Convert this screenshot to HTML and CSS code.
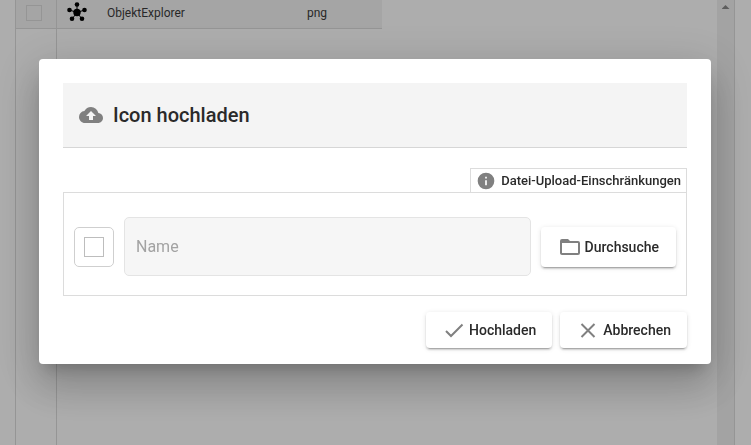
FILE: index.html
```html
<!DOCTYPE html>
<html lang="de">
<head>
<meta charset="utf-8">
<title>Icon hochladen</title>
<link rel="stylesheet" href="styles.css">
</head>
<body>
<main class="page">
  <section class="grid-panel">
    <div class="grid-body">
      <table class="icons">
        <tbody>
          <tr>
            <td class="col-check"><input type="checkbox" class="box row-box" aria-label="ObjektExplorer auswählen"></td>
            <td class="col-icon">
              <svg width="22" height="22" viewBox="0 0 22 22" aria-hidden="true">
                <g stroke="#000" stroke-width="1"><path d="M11 11.500V4M11 11.500L3.500 9M11 11.500L18.500 9M11 11.500L6 18M11 11.500L16 18"/></g>
                <circle cx="11" cy="11.500" r="3.700"/><circle cx="11" cy="3.500" r="2.300"/><circle cx="3.500" cy="9" r="2.300"/><circle cx="18.500" cy="9" r="2.300"/><circle cx="6" cy="17.700" r="2.300"/><circle cx="16" cy="17.700" r="2.300"/>
              </svg>
            </td>
            <td class="col-name">ObjektExplorer</td>
            <td class="col-type">png</td>
          </tr>
        </tbody>
      </table>
      <div class="check-gutter"></div>
    </div>
    <div class="scroll"><span class="scroll-up"></span></div>
  </section>
</main>
<div class="overlay">
  <form class="dialog" role="dialog" aria-labelledby="title">
    <header class="head">
      <svg width="24" height="24" viewBox="0 0 24 24" fill="#808080" aria-hidden="true"><path d="M19.350 10.040A7.490 7.490 0 0 0 12 4C9.110 4 6.600 5.640 5.350 8.040A5.994 5.994 0 0 0 0 14c0 3.310 2.690 6 6 6h13c2.760 0 5-2.240 5-5 0-2.640-2.050-4.780-4.650-4.960zM14 13v4h-4v-4H7l5-5 5 5h-3z"/></svg>
      <h1 id="title">Icon hochladen</h1>
    </header>
    <div class="tab">
      <svg width="20" height="20" viewBox="0 0 24 24" fill="#808080" aria-hidden="true"><path d="M12 2a10 10 0 1 0 0 20 10 10 0 0 0 0-20zm1 15h-2v-6h2v6zm0-8h-2V7h2v2z"/></svg>
      <span>Datei-Upload-Einschränkungen</span>
    </div>
    <div class="upload">
      <div class="pick"><input type="checkbox" class="box" aria-label="Datei auswählen"></div>
      <input type="text" class="name" placeholder="Name" aria-label="Name">
      <button type="button" class="btn browse">
        <svg width="24" height="24" viewBox="0 0 24 24" fill="#808080" aria-hidden="true"><path d="M20 6h-8l-2-2H4a2 2 0 0 0-2 2v12c0 1.100.9 2 2 2h16a2 2 0 0 0 2-2V8a2 2 0 0 0-2-2zm0 12H4V8h16v10z"/></svg>
        Durchsuche
      </button>
    </div>
    <footer class="actions">
      <button type="submit" class="btn">
        <svg width="24" height="24" viewBox="0 0 24 24" fill="none" stroke="#808080" stroke-width="2" aria-hidden="true"><path d="M4 13l5 5L20.500 6.500"/></svg>
        Hochladen
      </button>
      <button type="button" class="btn">
        <svg width="24" height="24" viewBox="0 0 24 24" fill="none" stroke="#808080" stroke-width="2" aria-hidden="true"><path d="M5.500 6l13 13M18.500 6l-13 13"/></svg>
        Abbrechen
      </button>
    </footer>
  </form>
</div>
</body>
</html>
```
FILE: styles.css
```css
* { box-sizing: border-box; }

body {
  margin: 0;
  font-family: Roboto, "Liberation Sans", sans-serif;
  color: #2a2a2a;
  background: #fff;
  overflow: hidden;
}

.page {
  display: flex;
  height: 100vh;
  padding: 0 16px 0 15px;
}

.grid-panel {
  display: flex;
  flex: 1;
  border: solid #dcdcdc;
  border-width: 0 1px;
}

.grid-body {
  display: flex;
  flex-direction: column;
  flex: 1;
}

.icons {
  border-collapse: separate;
  border-spacing: 0;
  table-layout: fixed;
  width: 366px;
  color: #3c3c3c;
  font-size: 12px;
}

.icons td {
  height: 29px;
  padding: 0;
  background: #f4f4f4;
  border-bottom: 1px solid #dcdcdc;
}

.icons .col-check {
  width: 41px;
  border-right: 1px solid #dcdcdc;
  vertical-align: top;
}

.col-icon {
  width: 50px;
  vertical-align: top;
}

.col-icon svg {
  display: block;
  margin: 1px 0 0 9px;
}

.icons .col-name { width: 200px; padding-bottom: 3px; }
.icons .col-type { padding-bottom: 3px; }

.check-gutter {
  flex: 1;
  width: 41px;
  border-right: 1px solid #dcdcdc;
}

.scroll {
  width: 17px;
  background: #f1f1f1;
}

.scroll-up {
  display: block;
  width: 8px;
  height: 4px;
  margin: 5px auto 0;
  background: #8a8a8a;
  clip-path: polygon(50% 0, 100% 100%, 0 100%);
}

.box {
  appearance: none;
  display: block;
  width: 20px;
  height: 20px;
  margin: 0;
  border: 1px solid #bdbdbd;
  background: transparent;
}

.row-box {
  width: 16px;
  height: 16px;
  margin: 5px 0 0 10px;
  border-color: #dcdcdc;
}

.overlay {
  position: fixed;
  inset: 0;
  padding: 59px 40px 0 39px;
  background: rgba(0, 0, 0, .32);
}

.dialog {
  padding: 24px 24px 16px;
  background: #fff;
  border-radius: 4px;
  box-shadow: 0 11px 15px -7px rgba(0, 0, 0, .2), 0 24px 38px 3px rgba(0, 0, 0, .14), 0 9px 46px 8px rgba(0, 0, 0, .12);
}

.head {
  display: flex;
  align-items: center;
  gap: 10px;
  height: 65px;
  padding: 0 16px;
  background: #f4f4f4;
  border-bottom: 1px solid #d6d6d6;
}

.head h1 {
  margin: 0;
  font-size: 20px;
  font-weight: 500;
  line-height: 32px;
}

.tab {
  display: flex;
  align-items: center;
  gap: 5px;
  width: fit-content;
  height: 24px;
  margin: 20px 0 0 auto;
  padding: 0 5px;
  border: solid #dcdcdc;
  border-width: 1px 1px 0;
  font-size: 13px;
  font-weight: 500;
}

.upload {
  display: flex;
  align-items: center;
  gap: 10px;
  padding: 24px 10px 19px;
  border: 1px solid #dcdcdc;
}

.pick {
  display: grid;
  place-items: center;
  width: 40px;
  height: 40px;
  border: 1px solid #cfcfcf;
  border-radius: 5px;
}

.name {
  flex: 1;
  min-width: 0;
  height: 59px;
  padding: 0 11px;
  border: 1px solid #e4e4e4;
  border-radius: 5px;
  background: #f6f6f6;
  font: 400 16px Roboto, "Liberation Sans", sans-serif;
}

.name::placeholder { color: #a3a3a3; }

.btn {
  display: flex;
  align-items: center;
  gap: 3px;
  height: 36px;
  padding: 0 16px;
  border: 0;
  border-radius: 4px;
  background: #fff;
  color: #2a2a2a;
  font: 500 14px Roboto, "Liberation Sans", sans-serif;
  box-shadow: 0 3px 1px -2px rgba(0, 0, 0, .2), 0 2px 2px 0 rgba(0, 0, 0, .14), 0 1px 5px 0 rgba(0, 0, 0, .12);
}

.browse {
  height: 40px;
  padding: 0 17px;
}

.actions {
  display: flex;
  justify-content: flex-end;
  gap: 8px;
  margin-top: 16px;
}
```
